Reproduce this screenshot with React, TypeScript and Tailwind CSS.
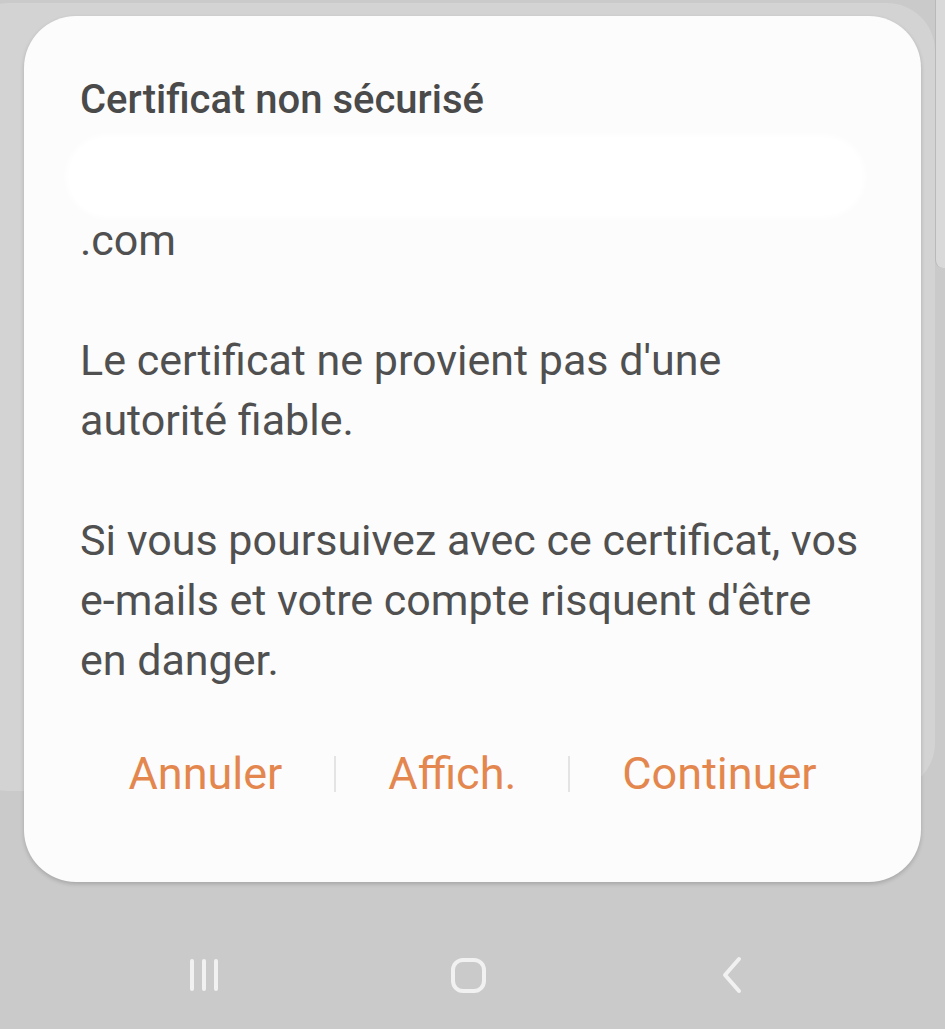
export default function App() {
  return (
    <div className="relative h-[1029px] w-[945px] overflow-hidden bg-[#cacaca] font-['Roboto',sans-serif]">
      {/* dimmed screen behind the dialog */}
      <div className="absolute left-[-40px] top-[3px] h-[788px] w-[975px] rounded-[48px] bg-[#d3d3d3]" />
      <div className="absolute right-0 top-0 h-[268px] w-[10px] rounded-bl-[8px] border-l border-[#b9b9b9] bg-[#d9d9d9]" />

      <div className="relative pl-[24px] pt-[16px]">
        <div className="flex h-[866px] w-[897px] flex-col rounded-[52px] bg-[#fcfcfc] px-[56px] pt-[60px] shadow-[0_2px_4px_rgba(0,0,0,0.18)]">
          <h1 className="text-[40px] font-medium leading-[48px] text-[#4a4a4a]">
            Certificat non sécurisé
          </h1>

          <div className="mt-[26px] whitespace-nowrap text-[43px] leading-[60px] text-[#505050]">
            <div className="flow-root h-[60px]">
              <div className="-ml-[14px] -mt-[15px] h-[83px] w-[799px] rounded-[42px] bg-white blur-[3px]" />
            </div>
            <div>.com</div>
            <div className="h-[60px]" />
            <div>Le certificat ne provient pas d'une</div>
            <div>autorité fiable.</div>
            <div className="h-[60px]" />
            <div>Si vous poursuivez avec ce certificat, vos</div>
            <div>e-mails et votre compte risquent d'être</div>
            <div>en danger.</div>
          </div>

          <div className="mt-[54px] flex h-[60px] items-center justify-center text-[45px] text-[#e4874f]">
            <button className="px-[52px] leading-[60px]">Annuler</button>
            <div className="h-[36px] w-[2px] shrink-0 bg-[#e4e4e4]" />
            <button className="px-[52px] leading-[60px]">Affich.</button>
            <div className="h-[36px] w-[2px] shrink-0 bg-[#e4e4e4]" />
            <button className="px-[52px] leading-[60px]">Continuer</button>
          </div>
        </div>
      </div>

      {/* navigation bar */}
      <div className="ml-[72px] mt-[63px] flex h-[60px] items-center">
        <div className="flex w-[264px] justify-center gap-[8px]">
          <span className="h-[32px] w-[4px] rounded-full bg-[#f1f1f1]" />
          <span className="h-[32px] w-[4px] rounded-full bg-[#f1f1f1]" />
          <span className="h-[32px] w-[4px] rounded-full bg-[#f1f1f1]" />
        </div>
        <div className="flex w-[264px] justify-center">
          <span className="h-[35px] w-[35px] rounded-[12px] border-[4px] border-[#f1f1f1]" />
        </div>
        <div className="flex w-[264px] justify-center">
          <svg width="26" height="38" viewBox="0 0 26 38" fill="none">
            <path d="M20 3 L6 19 L20 35" stroke="#f1f1f1" strokeWidth="4" strokeLinecap="round" strokeLinejoin="round" />
          </svg>
        </div>
      </div>
    </div>
  )
}
